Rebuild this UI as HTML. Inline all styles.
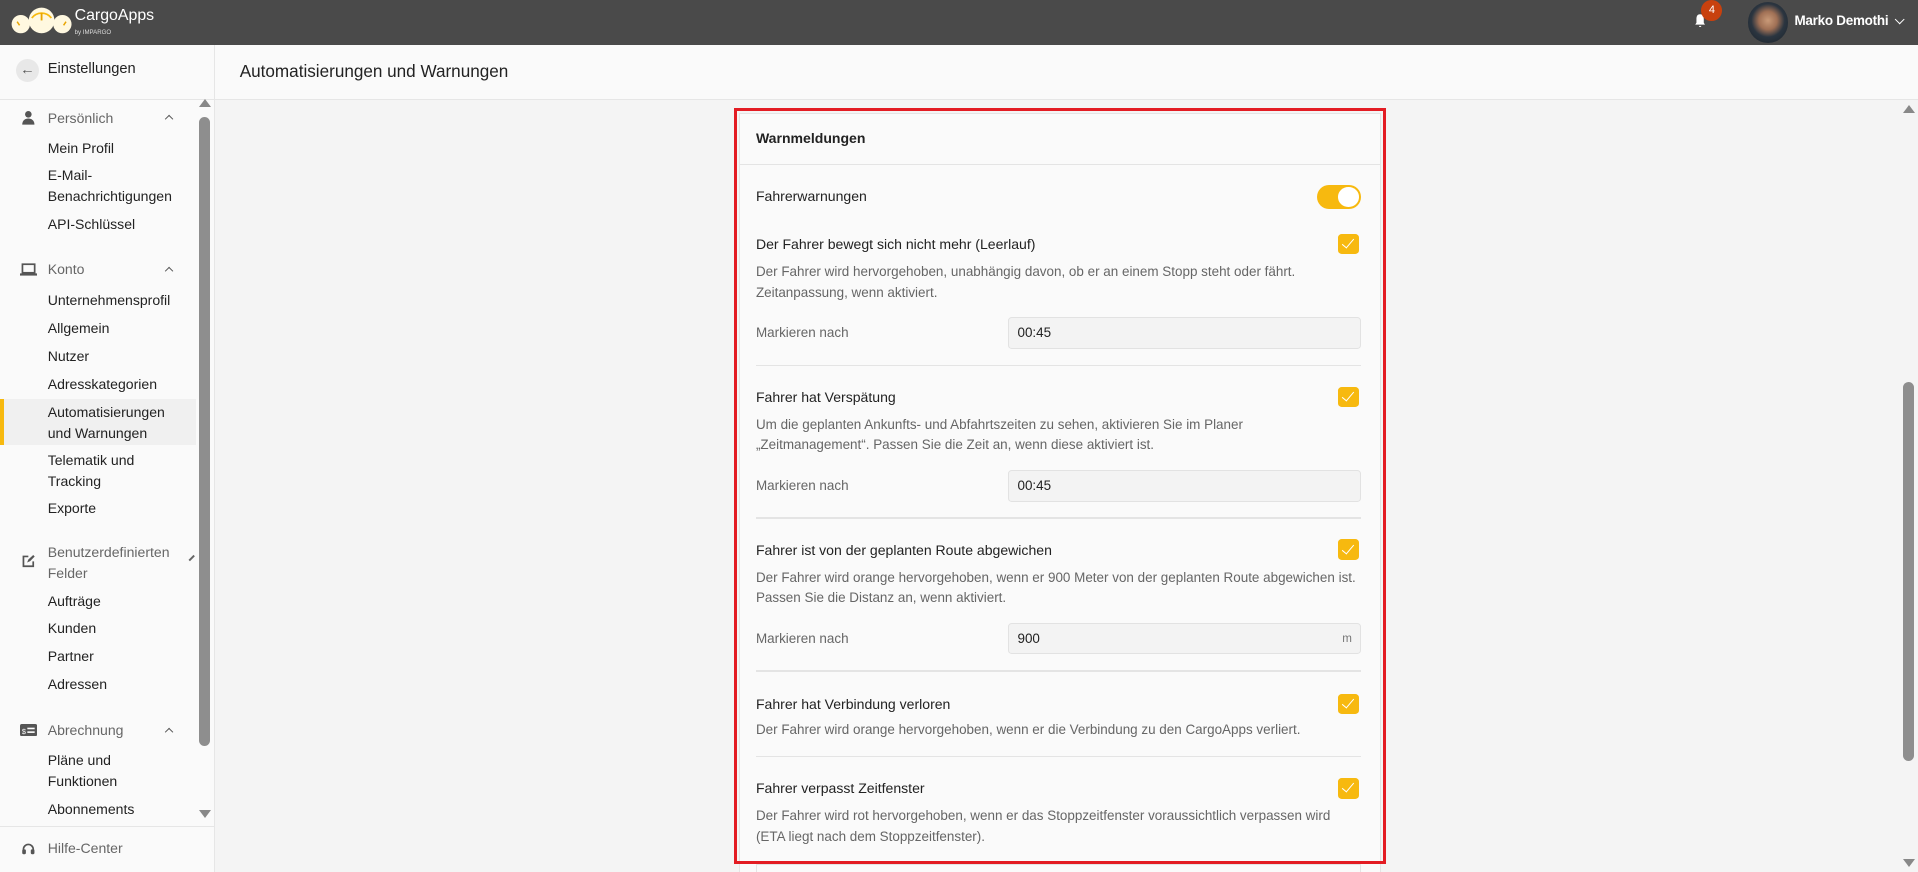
<!DOCTYPE html>
<html><head><meta charset="utf-8"><style>
*{box-sizing:border-box;margin:0;padding:0}
html,body{width:1918px;height:872px;overflow:hidden}
body{font-family:"Liberation Sans",sans-serif;color:#222;background:#f4f4f4}
#root{zoom:1.22321;width:1568px;height:713px;position:relative;overflow:hidden}
.abs{position:absolute}
.hdr{left:0;top:0;width:1568px;height:37px;background:#4a4a4a}
.side{left:0;top:37px;width:176px;height:676px;background:#fafafa;border-right:1px solid #e6e6e6}
.si{position:absolute;left:39px;font-size:11.5px;line-height:17px;color:#222;white-space:nowrap}
.sg{position:absolute;left:39px;font-size:11.5px;line-height:17px;color:#666}
.chev{position:absolute;left:136px;width:5px;height:5px;border-left:1.3px solid #555;border-top:1.3px solid #555;transform:rotate(45deg)}
.main{left:176px;top:37px;width:1392px;height:45px;background:#fafafa;border-bottom:1px solid #e6e6e6}
.card{left:604px;top:92px;width:525px;height:640px;background:#fafafa;border:1px solid #e4e4e4}
.red{left:600px;top:88px;width:533px;height:618px;border:3px solid #e31c23}
.t{position:absolute;left:618px;font-size:11.5px;color:#222;white-space:nowrap}
.d{position:absolute;left:618px;font-size:11px;line-height:17px;color:#666;white-space:nowrap}
.cb{position:absolute;left:1094px;width:17px;height:17px;background:#f7b90f;border-radius:3px}
.cb:after{content:"";position:absolute;left:5.5px;top:2px;width:4px;height:9px;border-right:1.6px solid #fff;border-bottom:1.6px solid #fff;transform:rotate(40deg)}
.inp{position:absolute;left:824px;width:289px;height:26px;background:#f3f3f3;border:1px solid #e2e2e2;border-radius:3px;font-size:11px;line-height:24px;padding-left:7px;color:#222}
.hr{position:absolute;left:618px;width:495px;height:1px;background:#e4e4e4}
</style></head><body><div id="root">
<div class="abs hdr">
 <svg class="abs" style="left:9px;top:6px" width="50" height="24" viewBox="0 0 50 24">
  <circle cx="8" cy="14" r="7.5" fill="#fff8e0"/><circle cx="42" cy="14" r="7.5" fill="#fff8e0"/><circle cx="25" cy="11" r="10.5" fill="#fff8e0"/>
  <path d="M17 9 A10 10 0 0 1 33 9" stroke="#f7b90f" stroke-width="1.5" fill="none"/><path d="M25 5 L25 11" stroke="#e8a400" stroke-width="1.5"/>
  <path d="M5 12 l2 3" stroke="#e8a400" stroke-width="1.2"/><path d="M45 12 l-2 3" stroke="#e8a400" stroke-width="1.2"/>
 </svg>
 <div class="abs" style="left:61px;top:6px;color:#fff;font-size:13px">CargoApps</div>
 <div class="abs" style="left:61px;top:24px;color:#ddd;font-size:5px">by IMPARGO</div>
 <svg class="abs" style="left:1385px;top:11px" width="10" height="12" viewBox="0 0 10 12"><path d="M5 1C2.5 1 2 3 2 5v3L1 9.5h8L8 8V5C8 3 7.5 1 5 1z M4 10.5h2a1 1 0 0 1-2 0z" fill="#fff"/></svg>
 <div class="abs" style="left:1391px;top:0px;width:17px;height:17px;border-radius:50%;background:#c8410e;color:#fff;font-size:9px;text-align:center;line-height:17px">4</div>
 <div class="abs" style="left:1429px;top:2px;width:33px;height:33px;border-radius:50%;background:radial-gradient(circle at 50% 45%,#c99a78 0,#a07055 30%,#2b3540 55%,#1a2128 100%)"></div>
 <div class="abs" style="left:1467px;top:11px;color:#fff;font-size:11px;font-weight:bold;letter-spacing:-0.2px">Marko Demothi</div>
 <div class="abs" style="left:1550px;top:13px;width:6px;height:6px;border-right:1.4px solid #fff;border-bottom:1.4px solid #fff;transform:rotate(45deg)"></div>
</div>
<div class="abs side">
 <div class="abs" style="left:13px;top:11px;width:19px;height:19px;border-radius:50%;background:#e8e8e8;color:#555;font-size:12px;text-align:center;line-height:19px">←</div>
 <div class="abs" style="left:39px;top:13px;font-size:12px">Einstellungen</div>
 <div class="abs" style="left:0;top:44px;width:175px;height:1px;background:#e6e6e6"></div>
 <div class="abs" style="left:0;top:638px;width:175px;height:1px;background:#e6e6e6"></div>
 <div class="abs" style="left:163px;top:59px;width:9px;height:514px;border-radius:5px;background:#8e8e8e"></div>
 <div class="abs" style="left:163px;top:44px;width:0;height:0;border-left:5px solid transparent;border-right:5px solid transparent;border-bottom:7px solid #888"></div>
 <div class="abs" style="left:163px;top:625px;width:0;height:0;border-left:5px solid transparent;border-right:5px solid transparent;border-top:7px solid #888"></div>
</div>
<div class="abs" style="left:0;top:326px;width:160px;height:38px;background:#f0f0f0"></div>
<div class="abs" style="left:0;top:326px;width:3px;height:38px;background:#f7b90f"></div>
<svg class="abs" style="left:17px;top:90px" width="12" height="12" viewBox="0 0 12 12"><circle cx="6" cy="3.5" r="2.7" fill="#555"/><path d="M1 12c0-3.5 2.5-5 5-5s5 1.5 5 5z" fill="#555"/></svg>
<svg class="abs" style="left:16px;top:215px" width="14" height="11" viewBox="0 0 14 11"><rect x="2" y="1" width="10" height="7" fill="none" stroke="#555" stroke-width="1.4"/><rect x="0" y="8.5" width="14" height="1.8" fill="#555"/></svg>
<svg class="abs" style="left:17px;top:453px" width="12" height="12" viewBox="0 0 12 12"><path d="M6 2H2v8h8V6" fill="none" stroke="#555" stroke-width="1.4"/><path d="M5 7l1-2.5L10 0.8l1.2 1.2-3.7 3.8z" fill="#555"/></svg>
<svg class="abs" style="left:16px;top:592px" width="14" height="10" viewBox="0 0 14 10"><rect width="14" height="10" rx="1.5" fill="#555"/><rect x="6" y="3" width="6" height="1.3" fill="#fff"/><rect x="6" y="6" width="6" height="1.3" fill="#fff"/><text x="1.5" y="8" font-size="6" fill="#fff" font-family="Liberation Sans">$</text></svg>
<svg class="abs" style="left:17px;top:688px" width="12" height="12" viewBox="0 0 12 12"><path d="M2 7V6a4 4 0 0 1 8 0v1" fill="none" stroke="#555" stroke-width="1.4"/><rect x="1" y="6" width="3" height="4" rx="1" fill="#555"/><rect x="8" y="6" width="3" height="4" rx="1" fill="#555"/></svg>
<div class="sg" style="top:88px">Persönlich</div><div class="chev" style="top:95px"></div>
<div class="si" style="top:113px">Mein Profil</div>
<div class="si" style="top:135px">E-Mail-<br>Benachrichtigungen</div>
<div class="si" style="top:175px">API-Schlüssel</div>
<div class="sg" style="top:212px">Konto</div><div class="chev" style="top:219px"></div>
<div class="si" style="top:237px">Unternehmensprofil</div>
<div class="si" style="top:260px">Allgemein</div>
<div class="si" style="top:283px">Nutzer</div>
<div class="si" style="top:306px">Adresskategorien</div>
<div class="si" style="top:329px">Automatisierungen<br>und Warnungen</div>
<div class="si" style="top:368px">Telematik und<br>Tracking</div>
<div class="si" style="top:407px">Exporte</div>
<div class="sg" style="top:443px">Benutzerdefinierten<br>Felder</div>
<div class="abs" style="left:154px;top:455px;width:6px;height:1.3px;background:#666;transform:rotate(-45deg)"></div>
<div class="si" style="top:483px">Aufträge</div>
<div class="si" style="top:505px">Kunden</div>
<div class="si" style="top:528px">Partner</div>
<div class="si" style="top:551px">Adressen</div>
<div class="sg" style="top:589px">Abrechnung</div><div class="chev" style="top:596px"></div>
<div class="si" style="top:613px">Pläne und<br>Funktionen</div>
<div class="si" style="top:653px">Abonnements</div>
<div class="sg" style="top:685px">Hilfe-Center</div>
<div class="abs main"><div class="abs" style="left:20px;top:14px;font-size:14px;color:#222">Automatisierungen und Warnungen</div></div>
<div class="abs" style="left:1556px;top:86px;width:0;height:0;border-left:5px solid transparent;border-right:5px solid transparent;border-bottom:7px solid #888"></div>
<div class="abs" style="left:1556px;top:312px;width:9px;height:310px;border-radius:5px;background:#8e8e8e"></div>
<div class="abs" style="left:1556px;top:702px;width:0;height:0;border-left:5px solid transparent;border-right:5px solid transparent;border-top:7px solid #888"></div>
<div class="abs card"></div>
<div class="abs" style="left:605px;top:134px;width:523px;height:1px;background:#e4e4e4"></div>
<div class="t" style="top:106px;font-weight:bold;font-size:11.5px">Warnmeldungen</div>
<div class="t" style="top:154px">Fahrerwarnungen</div>
<div class="abs" style="left:1077px;top:151px;width:36px;height:20px;border-radius:10px;background:#f7b90f"></div>
<div class="abs" style="left:1094px;top:153px;width:17px;height:16px;border-radius:50%;background:#fff"></div>

<div class="t" style="top:193px">Der Fahrer bewegt sich nicht mehr (Leerlauf)</div><div class="cb" style="top:191px"></div>
<div class="d" style="top:214px">Der Fahrer wird hervorgehoben, unabhängig davon, ob er an einem Stopp steht oder fährt.<br>Zeitanpassung, wenn aktiviert.</div>
<div class="d" style="top:264px">Markieren nach</div><div class="inp" style="top:259px">00:45</div>
<div class="hr" style="top:298px"></div>

<div class="t" style="top:318px">Fahrer hat Verspätung</div><div class="cb" style="top:316px"></div>
<div class="d" style="top:339px">Um die geplanten Ankunfts- und Abfahrtszeiten zu sehen, aktivieren Sie im Planer<br>„Zeitmanagement“. Passen Sie die Zeit an, wenn diese aktiviert ist.</div>
<div class="d" style="top:389px">Markieren nach</div><div class="inp" style="top:384px">00:45</div>
<div class="hr" style="top:423px"></div>

<div class="t" style="top:443px">Fahrer ist von der geplanten Route abgewichen</div><div class="cb" style="top:441px"></div>
<div class="d" style="top:464px">Der Fahrer wird orange hervorgehoben, wenn er 900 Meter von der geplanten Route abgewichen ist.<br>Passen Sie die Distanz an, wenn aktiviert.</div>
<div class="d" style="top:514px">Markieren nach</div><div class="inp" style="top:509px">900<span style="position:absolute;right:7px;color:#777;font-size:9.5px">m</span></div>
<div class="hr" style="top:548px"></div>

<div class="t" style="top:569px">Fahrer hat Verbindung verloren</div><div class="cb" style="top:567px"></div>
<div class="d" style="top:589px">Der Fahrer wird orange hervorgehoben, wenn er die Verbindung zu den CargoApps verliert.</div>
<div class="hr" style="top:618px"></div>

<div class="t" style="top:638px">Fahrer verpasst Zeitfenster</div><div class="cb" style="top:636px"></div>
<div class="d" style="top:659px">Der Fahrer wird rot hervorgehoben, wenn er das Stoppzeitfenster voraussichtlich verpassen wird<br>(ETA liegt nach dem Stoppzeitfenster).</div>
<div class="abs" style="left:618px;top:706px;width:495px;height:10px;border:1px solid #e4e4e4"></div>
<div class="abs red"></div>
</div></body></html>
